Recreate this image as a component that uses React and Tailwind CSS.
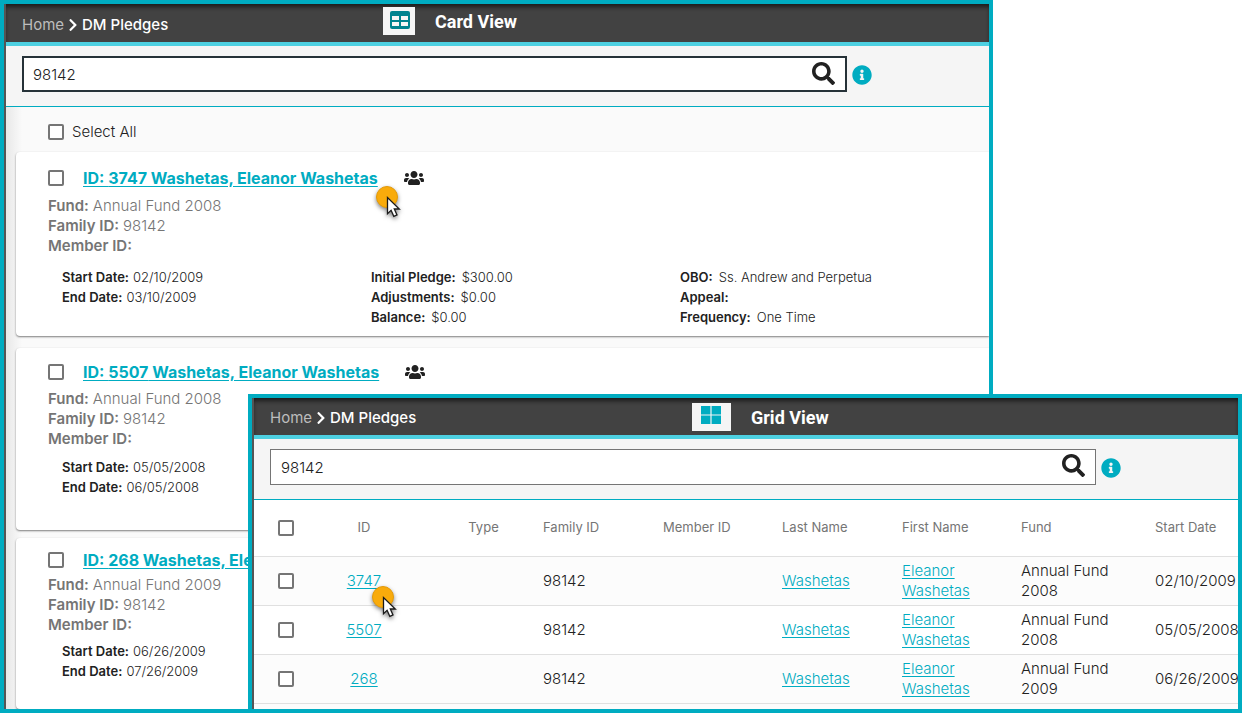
import React, { useState } from 'react';
import { FaUsers, FaSearch, FaInfoCircle, FaChevronRight } from 'react-icons/fa';

const pledges = [
    {
        id: '3747', fund: 'Annual Fund 2008', familyId: '98142', start: '02/10/2009', end: '03/10/2009',
        initial: '$300.00', adjustments: '$0.00', balance: '$0.00', obo: 'Ss. Andrew and Perpetua', frequency: 'One Time',
        spacing: { card: 'mb-3 pt-4 pb-[9px]', summary: 'mt-2', details: 'mt-[11px]' },
    },
    {
        id: '5507', fund: 'Annual Fund 2008', familyId: '98142', start: '05/05/2008', end: '06/05/2008',
        spacing: { card: 'mb-2 pt-3.5 pb-[33px]', summary: 'mt-[7px]', details: 'mt-2' },
    },
    {
        id: '268', fund: 'Annual Fund 2009', familyId: '98142', start: '06/26/2009', end: '07/26/2009',
        spacing: { card: 'grow pt-3 pb-7', summary: 'mt-[5px]', details: 'mt-1.5' },
    },
];

const CardIcon = () => (
    <svg width="20" height="18" viewBox="0 0 20 18" aria-hidden="true">
        <rect width="20" height="18" rx="2" fill="#00838f" />
        <path d="M2 5h7v4H2zM11 5h7v4h-7zM2 11h7v4H2zM11 11h7v4h-7z" fill="#f5f5f5" />
    </svg>
);

const GridIcon = () => (
    <svg width="20" height="18" viewBox="0 0 20 18" aria-hidden="true">
        <path d="M0 0h9.4v8.4H0zM10.6 0H20v8.4h-9.4zM0 9.6h9.4V18H0zM10.6 9.6H20V18h-9.4z" fill="#00acc1" />
    </svg>
);

const Checkbox = ({ id, label }) => (
    <input type="checkbox" id={id} aria-label={label}
        className="block size-4 flex-none appearance-none rounded-xs border-2 border-[#757575] bg-white checked:bg-[#00acc1]" />
);

const Pointer = ({ className }) => (
    <svg width="30" height="38" viewBox="0 0 30 38" aria-hidden="true" className={`pointer-events-none absolute drop-shadow-[0_2px_2px_rgba(0,0,0,0.5)] ${className}`}>
        <circle cx="12" cy="12" r="10.5" fill="#f9ab0b" stroke="#e39a0a" />
        <path d="M12.5 12.5v16.2l3.6-3.4 2.7 6 3.2-1.4-2.7-5.9h5z" fill="#fff" stroke="#1a1a1a" strokeWidth="1.3" />
    </svg>
);

const TopBar = ({ title, icon, className, navClass, iconClass }) => (
    <header className={`flex items-start border-b-4 border-[#4dd0e1] bg-[#424242] text-white shadow-[inset_0_4px_4px_-1px_#1c1c1c] ${className}`}>
        <nav className={`flex flex-none items-center pl-4 text-[15px] leading-5 ${navClass}`}>
            <a href="#home" className="text-[#bdbdbd]">Home</a>
            <FaChevronRight size={14} className="mx-0.5" />
            <span className="font-medium">DM Pledges</span>
        </nav>
        <button type="button" aria-label={title} className={`flex flex-none items-start justify-center bg-[#f5f5f5] ${iconClass}`}>{icon}</button>
        <h1 className="ml-5 font-['Roboto'] text-lg leading-[30px] font-bold">{title}</h1>
    </header>
);

const SearchBar = ({ id, boxClass }) => {
    const [value, setValue] = useState('98142');
    return (
        <form className="flex items-center border-b border-[#00acc1] bg-[#f5f5f5] pt-2.5 pr-[117px] pb-3.5 pl-4">
            <div className={`flex h-9 grow items-center bg-white pr-2.5 ${boxClass}`}>
                <input id={id} aria-label="Search" value={value} onChange={(e) => setValue(e.target.value)}
                    className="min-w-0 grow bg-transparent pt-0.5 text-[15px] leading-5 font-light outline-none" />
                <button type="submit" aria-label="Run search" className="-mt-0.5"><FaSearch size={23} /></button>
            </div>
            <button type="button" aria-label="Search help" className="mt-0.5 ml-[5px] text-[#00acc1]"><FaInfoCircle size={20} /></button>
        </form>
    );
};

const Field = ({ label, value, gap = 'ml-1' }) => (
    <div className="whitespace-nowrap">
        <span className="font-semibold">{label}:</span>
        <span className={gap}>{value}</span>
    </div>
);

const PledgeCard = ({ pledge, pointer }) => {
    const { spacing } = pledge;
    return (
        <article className={`ml-2.5 rounded-l bg-white pl-8 shadow-[0_1px_2px_rgba(0,0,0,0.5)] ${spacing.card}`}>
            <div className="flex h-5 items-center">
                <Checkbox id={`card-${pledge.id}`} label={`Select pledge ${pledge.id}`} />
                <div className="relative ml-[19px]">
                    <a href={`#pledge-${pledge.id}`} className="block text-base leading-5 font-bold whitespace-nowrap text-[#00acc1] underline underline-offset-2">
                        ID: {pledge.id} Washetas, Eleanor Washetas
                    </a>
                    {pointer && <Pointer className="top-[17px] -right-[27px]" />}
                </div>
                <FaUsers size={20} className="ml-[26px]" />
            </div>
            <div className={`text-[15px] leading-5 font-light text-[#757575] ${spacing.summary}`}>
                <Field label="Fund" value={pledge.fund} />
                <Field label="Family ID" value={pledge.familyId} />
                <Field label="Member ID" />
            </div>
            <div className={`grid grid-cols-3 pl-3.5 text-[13px] leading-5 font-light ${spacing.details}`}>
                <div>
                    <Field label="Start Date" value={pledge.start} />
                    <Field label="End Date" value={pledge.end} />
                </div>
                {pledge.initial && (
                    <>
                        <div>
                            <Field label="Initial Pledge" value={pledge.initial} gap="ml-1.5" />
                            <Field label="Adjustments" value={pledge.adjustments} gap="ml-1.5" />
                            <Field label="Balance" value={pledge.balance} gap="ml-1.5" />
                        </div>
                        <div>
                            <Field label="OBO" value={pledge.obo} gap="ml-1.5" />
                            <Field label="Appeal" />
                            <Field label="Frequency" value={pledge.frequency} gap="ml-1.5" />
                        </div>
                    </>
                )}
            </div>
        </article>
    );
};

const CardView = () => (
    <section className="mr-[249px] flex min-h-screen flex-col overflow-hidden border-4 border-[#00acc1] bg-[#555]">
        <div className="ml-0.5 flex grow flex-col bg-[linear-gradient(to_right,#e8e8e8,#fafafa_16px)]">
            <TopBar title="Card View" icon={<CardIcon />} className="pt-[3px] pb-[5px]" navClass="w-[377px] pt-2" iconClass="h-7 w-8 pt-1 pl-0.5" />
            <SearchBar id="card-search" boxClass="border-2 border-[#263238] pl-[9px]" />
            <div className="flex h-[45px] items-center pt-1 pl-[42px]">
                <Checkbox id="select-all" />
                <label htmlFor="select-all" className="ml-2 text-[15px] leading-5 font-light">Select All</label>
            </div>
            {pledges.map((p, i) => <PledgeCard key={p.id} pledge={p} pointer={i === 0} />)}
        </div>
    </section>
);

const GridView = () => (
    <section className="absolute right-0 bottom-0 left-[248px] overflow-hidden border-4 border-[#00acc1] bg-[#555]">
        <div className="ml-0.5 bg-[#fcfcfc] pb-[5px]">
            <TopBar title="Grid View" icon={<GridIcon />} className="pt-[5px] pb-0.5" navClass="w-[438px] pt-[5px]" iconClass="h-7 w-[39px] pt-[3px] pr-0.5" />
            <SearchBar id="grid-search" boxClass="border border-[#757575] pl-2.5" />
            <table className="w-full table-fixed border-collapse text-left">
                <colgroup>
                    <col className="w-[50px]" />
                    <col className="w-[120px]" />
                    <col className="w-[119px]" />
                    <col className="w-[120px]" />
                    <col className="w-[119px]" />
                    <col className="w-[120px]" />
                    <col className="w-[119px]" />
                    <col className="w-[134px]" />
                    <col />
                </colgroup>
                <thead>
                    <tr className="h-[57px] border-b border-[#e0e0e0] bg-white text-[13px] text-[#757575] *:font-normal">
                        <th className="pl-6"><Checkbox id="grid-all" label="Select all pledges" /></th>
                        <th className="text-center">ID</th>
                        <th className="text-center">Type</th>
                        <th>Family ID</th>
                        <th>Member ID</th>
                        <th>Last Name</th>
                        <th>First Name</th>
                        <th>Fund</th>
                        <th className="whitespace-nowrap">Start Date</th>
                    </tr>
                </thead>
                <tbody>
                    {pledges.map((p, i) => (
                        <tr key={p.id} className="h-[49px] border-b border-[#e0e0e0] text-[15px] leading-5 font-light odd:bg-[#fcfcfc] even:bg-white">
                            <td className="pl-6"><Checkbox id={`grid-${p.id}`} label={`Select pledge ${p.id}`} /></td>
                            <td className="text-center">
                                <div className="relative inline-block">
                                    <a href={`#pledge-${p.id}`} className="text-[#00acc1] underline underline-offset-2">{p.id}</a>
                                    {i === 0 && <Pointer className="top-3.5 -right-5" />}
                                </div>
                            </td>
                            <td />
                            <td>{p.familyId}</td>
                            <td />
                            <td><a href="#washetas" className="text-[#00acc1] underline underline-offset-2">Washetas</a></td>
                            <td className="pr-4"><a href="#eleanor" className="text-[#00acc1] underline underline-offset-2">Eleanor Washetas</a></td>
                            <td className="pr-8">{p.fund}</td>
                            <td className="whitespace-nowrap">{p.start}</td>
                        </tr>
                    ))}
                </tbody>
            </table>
        </div>
    </section>
);

const App = () => (
    <main className="relative min-h-screen bg-white font-['Inter',sans-serif] text-[#212121]">
        <CardView />
        <GridView />
    </main>
);

export default App;
